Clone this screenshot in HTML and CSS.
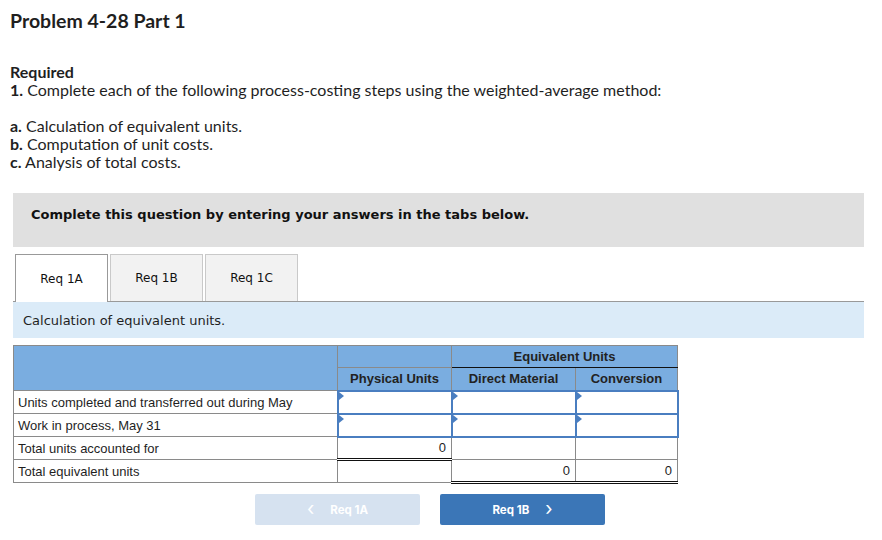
FILE: index.html
```html
<!DOCTYPE html>
<html>
<head>
<meta charset="utf-8">
<link rel="stylesheet" href="styles.css">
</head>
<body>
<div class="page">
  <h1 class="title">Problem 4-28 Part 1</h1>
  <div class="req">
    <p class="req-head">Required</p>
    <p><b>1.</b> Complete each of the following process-costing steps using the weighted-average method:</p>
    <p class="gap"><b>a.</b> Calculation of equivalent units.</p>
    <p><b>b.</b> Computation of unit costs.</p>
    <p><b>c.</b> Analysis of total costs.</p>
  </div>
  <div class="instr">Complete this question by entering your answers in the tabs below.</div>
  <div class="tabs">
    <div class="tab active">Req 1A</div>
    <div class="tab">Req 1B</div>
    <div class="tab">Req 1C</div>
  </div>
  <div class="band">Calculation of equivalent units.</div>
  <table class="grid">
    <tr class="h1">
      <th class="lab" rowspan="2"></th>
      <th class="pu1"></th>
      <th colspan="2" class="eq">Equivalent Units</th>
    </tr>
    <tr class="h2">
      <th class="pu">Physical Units</th>
      <th class="dm">Direct Material</th>
      <th class="cv">Conversion</th>
    </tr>
    <tr>
      <td class="lab">Units completed and transferred out during May</td>
      <td class="in"><span class="tri"></span></td>
      <td class="in"><span class="tri"></span></td>
      <td class="in"><span class="tri"></span></td>
    </tr>
    <tr>
      <td class="lab">Work in process, May 31</td>
      <td class="in"><span class="tri"></span></td>
      <td class="in"><span class="tri"></span></td>
      <td class="in"><span class="tri"></span></td>
    </tr>
    <tr>
      <td class="lab">Total units accounted for</td>
      <td class="num total">0</td>
      <td class="num"></td>
      <td class="num"></td>
    </tr>
    <tr>
      <td class="lab">Total equivalent units</td>
      <td class="num"></td>
      <td class="num total">0</td>
      <td class="num total">0</td>
    </tr>
  </table>
  <div class="nav">
    <div class="btn prev"><span class="chev">&#8249;</span><span>Req 1A</span></div>
    <div class="btn next"><span>Req 1B</span><span class="chev">&#8250;</span></div>
  </div>
</div>
</body>
</html>
```
FILE: styles.css
```css
html, body { margin: 0; padding: 0; background: #fff; }
.page {
  padding-left: 13px;
  width: 851px;
  color: #1f1f1f;
  font-family: "Lato", "Open Sans", sans-serif;
}
.title {
  margin: 10px 0 0 -3px;
  font-size: 19.5px;
  font-weight: 700;
  line-height: 22px;
}
.req { margin: 31px 0 0 -3px; font-size: 16px; line-height: 18px; }
.req p { margin: 0; }
.req .req-head { font-weight: 700; }
.req .gap { margin-top: 18px; }
.instr {
  margin-top: 22px;
  height: 54px;
  background: #e0e0e0;
  font-family: "DejaVu Sans", Verdana, sans-serif;
  font-weight: 700;
  font-size: 13px;
  line-height: 16px;
  color: #111;
  padding: 14px 0 0 18px;
  box-sizing: border-box;
}
.tabs {
  margin-top: 7px;
  display: flex;
  gap: 2px;
  padding-left: 2px;
  border-bottom: 1px solid #999;
  height: 47px;
}
.tab {
  width: 93px;
  height: 47px;
  box-sizing: border-box;
  background: #f2f2f2;
  border: 1px solid #c9c9c9;
  border-bottom: none;
  font-family: "DejaVu Sans", Verdana, sans-serif;
  font-size: 12px;
  color: #111;
  display: flex;
  align-items: center;
  justify-content: center;
}
.tab.active {
  background: #fff;
  border-color: #999;
  height: 48px;
  margin-bottom: -1px;
}
.band {
  height: 36px;
  background: #dbebf8;
  font-family: "DejaVu Sans", Verdana, sans-serif;
  font-size: 13px;
  color: #1f1f1f;
  display: flex;
  align-items: center;
  padding-left: 10px;
}
.grid {
  margin-top: 7px;
  border-collapse: collapse;
  font-family: "Liberation Sans", Arial, sans-serif;
  font-size: 13px;
  color: #1f1f1f;
}
.grid th, .grid td {
  border: 1px solid #8a8a8a;
  padding: 0;
  height: 23px;
  box-sizing: border-box;
}
.grid th {
  background: #7aade0;
  font-weight: 700;
  font-size: 13px;
  color: #222;
  text-align: center;
}
.grid .lab { width: 324px; text-align: left; padding-left: 4px; }
.grid th.lab { padding: 0; }
.grid .pu, .grid .pu1 { width: 114px; }
.grid .dm { width: 124px; }
.grid .cv { width: 102px; }
.grid .h1 th { height: 22px; }
.grid .eq { border-bottom: 1px solid #111; }
.grid td.in {
  border: 2px solid #4a7ec0;
  position: relative;
  background: #fff;
}
.tri {
  position: absolute;
  left: 0;
  top: 0;
  width: 0;
  height: 0;
  border-top: 4px solid transparent;
  border-bottom: 4px solid transparent;
  border-left: 5px solid #4a7ec0;
}
.grid td.num { text-align: right; padding-right: 5px; }
.grid td.total {
  border-top: 1px solid #111;
  border-bottom: 3px double #111;
}
.nav {
  margin-top: 10px;
  display: flex;
  gap: 20px;
  padding-left: 242px;
}
.btn {
  width: 165px;
  height: 31px;
  border-radius: 2px;
  display: flex;
  align-items: center;
  justify-content: center;
  gap: 16px;
  font-family: "Inter", "Roboto", sans-serif;
  font-weight: 700;
  font-size: 11.5px;
  color: #fff;
}
.btn .chev { font-size: 19px; font-weight: 400; line-height: 1; margin-top: -3px; }
.prev { background: #d6e2f0; }
.next { background: #3b76b7; }
```
